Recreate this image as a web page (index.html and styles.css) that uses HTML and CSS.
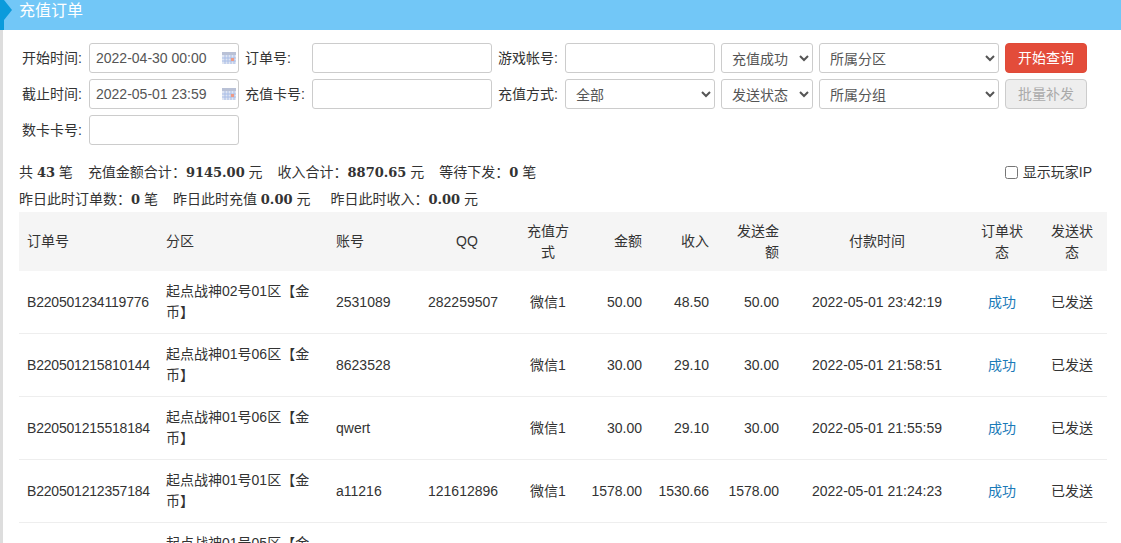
FILE: index.html
```html
<!DOCTYPE html>
<html lang="zh-CN">
<head>
<meta charset="utf-8">
<title>充值订单</title>
<link rel="stylesheet" href="styles.css">
</head>
<body>
<header class="title-bar">
  <span class="title-mark"></span>
  <h1 class="title">充值订单</h1>
</header>
<main class="main">
  <form class="filters">
    <label class="lbl">开始时间:</label>
    <div class="date-field">
      <input class="field" type="text" value="2022-04-30 00:00">
      <svg class="cal" width="14" height="12" viewBox="0 0 14 12"><rect x="0" y="0" width="14" height="12" fill="#dfe5f2"/><rect x="0" y="0" width="14" height="3" fill="#b9c1d6"/><path d="M0 6h14M0 9h14M3 3v9M6 3v9M9 3v9M12 3v9" stroke="#a9bde6" stroke-width="1"/><rect x="9" y="6" width="3" height="3" fill="#ec9a86"/></svg>
    </div>
    <label class="lbl">订单号:</label>
    <input class="field" type="text">
    <label class="lbl">游戏帐号:</label>
    <input class="field" type="text">
    <select class="field sel"><option>充值成功</option></select>
    <select class="field sel"><option>所属分区</option></select>
    <button class="btn btn-red" type="button">开始查询</button>

    <label class="lbl">截止时间:</label>
    <div class="date-field">
      <input class="field" type="text" value="2022-05-01 23:59">
      <svg class="cal" width="14" height="12" viewBox="0 0 14 12"><rect x="0" y="0" width="14" height="12" fill="#dfe5f2"/><rect x="0" y="0" width="14" height="3" fill="#b9c1d6"/><path d="M0 6h14M0 9h14M3 3v9M6 3v9M9 3v9M12 3v9" stroke="#a9bde6" stroke-width="1"/><rect x="9" y="6" width="3" height="3" fill="#ec9a86"/></svg>
    </div>
    <label class="lbl">充值卡号:</label>
    <input class="field" type="text">
    <label class="lbl">充值方式:</label>
    <select class="field sel"><option>全部</option></select>
    <select class="field sel"><option>发送状态</option></select>
    <select class="field sel"><option>所属分组</option></select>
    <button class="btn btn-off" type="button" disabled>批量补发</button>

    <label class="lbl">数卡卡号:</label>
    <input class="field" type="text">
  </form>

  <section class="summary">
    <div class="sum-line">
      <p class="sum-text"><span class="g1">共 <b>43</b> 笔</span><span class="g2">充值金额合计<i class="colon">：</i><b>9145.00</b> 元</span><span class="g2">收入合计<i class="colon">：</i><b>8870.65</b> 元</span><span>等待下发<i class="colon">：</i><b>0</b> 笔</span></p>
      <label class="ip-toggle"><input class="ip-box" type="checkbox">显示玩家IP</label>
    </div>
    <p class="sum-text"><span class="g1">昨日此时订单数<i class="colon">：</i><b>0</b> 笔</span><span class="g3">昨日此时充值 <b>0.00</b> 元</span><span>昨日此时收入<i class="colon">：</i><b>0.00</b> 元</span></p>
  </section>

  <table class="orders">
    <colgroup>
      <col class="c1"><col class="c2"><col class="c3"><col class="c4"><col class="c5"><col class="c6"><col class="c7"><col class="c8"><col class="c9"><col class="c10"><col class="c11">
    </colgroup>
    <thead>
      <tr>
        <th>订单号</th><th>分区</th><th>账号</th><th class="ctr">QQ</th><th class="ctr">充值方式</th><th class="rgt">金额</th><th class="rgt">收入</th><th class="rgt">发送金额</th><th class="ctr">付款时间</th><th class="ctr">订单状态</th><th class="ctr">发送状态</th>
      </tr>
    </thead>
    <tbody>
      <tr><td class="no">B220501234119776</td><td>起点战神02号01区【金币】</td><td>2531089</td><td>282259507</td><td class="ctr">微信1</td><td class="rgt">50.00</td><td class="rgt">48.50</td><td class="rgt">50.00</td><td class="ctr">2022-05-01 23:42:19</td><td class="ctr ok">成功</td><td class="ctr">已发送</td></tr>
      <tr><td class="no">B220501215810144</td><td>起点战神01号06区【金币】</td><td>8623528</td><td></td><td class="ctr">微信1</td><td class="rgt">30.00</td><td class="rgt">29.10</td><td class="rgt">30.00</td><td class="ctr">2022-05-01 21:58:51</td><td class="ctr ok">成功</td><td class="ctr">已发送</td></tr>
      <tr><td class="no">B220501215518184</td><td>起点战神01号06区【金币】</td><td>qwert</td><td></td><td class="ctr">微信1</td><td class="rgt">30.00</td><td class="rgt">29.10</td><td class="rgt">30.00</td><td class="ctr">2022-05-01 21:55:59</td><td class="ctr ok">成功</td><td class="ctr">已发送</td></tr>
      <tr><td class="no">B220501212357184</td><td>起点战神01号01区【金币】</td><td>a11216</td><td>121612896</td><td class="ctr">微信1</td><td class="rgt">1578.00</td><td class="rgt">1530.66</td><td class="rgt">1578.00</td><td class="ctr">2022-05-01 21:24:23</td><td class="ctr ok">成功</td><td class="ctr">已发送</td></tr>
      <tr><td></td><td>起点战神01号05区【金币】</td><td></td><td></td><td></td><td></td><td></td><td></td><td></td><td></td><td></td></tr>
    </tbody>
  </table>
</main>
</body>
</html>
```
FILE: styles.css
```css
* { box-sizing: border-box; }
html, body { margin: 0; height: 543px; overflow: hidden; background: #fff; }
body {
  font-family: "Liberation Sans", "Noto Sans CJK SC", sans-serif;
  font-size: 14px;
  line-height: 21px;
  color: #333;
}
.title-bar {
  position: relative;
  height: 30px;
  background: #72c7f7;
  padding: 1px 0 0 19px;
}
.title-mark {
  position: absolute;
  left: 0;
  top: 0;
  width: 4px;
  height: 30px;
  background: #0a9bdc;
}
.title-mark::after {
  content: "";
  position: absolute;
  left: 4px;
  top: 0;
  border-left: 8px solid #0a9bdc;
  border-top: 10px solid transparent;
  border-bottom: 10px solid transparent;
}
.title {
  margin: 0;
  font-size: 16px;
  font-weight: normal;
  line-height: 20px;
  color: #fff;
}
.main {
  border-left: 3px solid #ddd;
  height: 513px;
}
.filters {
  display: grid;
  grid-template-columns: 61px 150px 61px 180px 61px 150px 92px 180px 82px;
  grid-auto-rows: 30px;
  gap: 6px;
  padding: 13px 0 0 19px;
}
.lbl { line-height: 30px; white-space: nowrap; }
.field {
  width: 100%;
  height: 30px;
  border: 1px solid #ccc;
  border-radius: 3px;
  background: #fff;
  padding: 0 6px;
  font: inherit;
  color: #555;
  outline: none;
}
.sel { padding: 2px 0 0 6px; }
.date-field { position: relative; }
.cal { position: absolute; right: 3px; top: 9px; }
.btn {
  height: 30px;
  border-radius: 4px;
  padding: 0;
  font: inherit;
}
.btn-red { background: #e34c3a; border: 1px solid #e04a38; color: #fff; }
.btn-off { background: #eee; border: 1px solid #ccc; color: #aaa; }
.summary { margin-top: 13px; padding-left: 16px; }
.sum-line { display: flex; justify-content: space-between; height: 27px; padding-right: 29px; }
.sum-text { margin: 0; height: 27px; line-height: 29px; white-space: nowrap; }
.sum-text b { font-family: "DejaVu Serif", "Noto Sans CJK SC", serif; font-size: 13px; line-height: 1; }
.colon { font-style: normal; font-family: "Noto Sans CJK TC", sans-serif; line-height: 1; }
.g1 { margin-right: 15px; }
.g2 { margin-right: 15px; }
.g3 { margin-right: 20px; }
.ip-toggle { display: flex; align-items: center; height: 29px; }
.ip-box { width: 13px; height: 13px; margin: 0 5px 0 0; }
.orders {
  margin-left: 16px;
  width: 1088px;
  table-layout: fixed;
  border-collapse: separate;
  border-spacing: 0;
}
.c1 { width: 139px; }
.c2 { width: 170px; }
.c3 { width: 92px; }
.c4 { width: 94px; }
.c5 { width: 68px; }
.c6 { width: 68px; }
.c7 { width: 67px; }
.c8 { width: 70px; }
.c9 { width: 180px; }
.c10 { width: 70px; }
.c11 { width: 70px; }
.orders th {
  font-weight: normal;
  text-align: left;
  background: #f5f5f5;
  padding: 8px;
  height: 59px;
}
.orders td {
  padding: 10px 8px;
  height: 63px;
  border-bottom: 1px solid #eee;
}
.orders .no { letter-spacing: -0.2px; }
.orders .ctr { text-align: center; }
.orders .rgt { text-align: right; }
.ok { color: #1a7ab8; }
```
